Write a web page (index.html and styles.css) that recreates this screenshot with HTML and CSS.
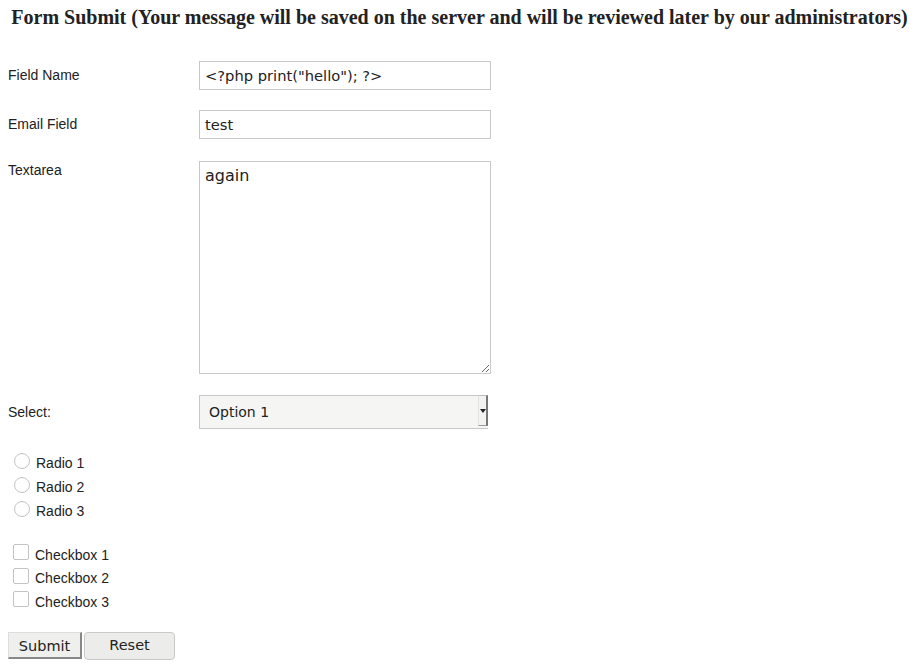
FILE: index.html
```html
<!DOCTYPE html>
<html>
<head>
<meta charset="utf-8">
<link rel="stylesheet" href="styles.css">
</head>
<body>
<h1 class="title">Form Submit (Your message will be saved on the server and will be reviewed later by our administrators)</h1>
<form class="form">
  <div class="row">
    <label class="lbl">Field Name</label>
    <input class="field" type="text" value='&lt;?php print("hello"); ?&gt;'>
  </div>
  <div class="row">
    <label class="lbl">Email Field</label>
    <input class="field" type="text" value="test">
  </div>
  <div class="row top">
    <label class="lbl lbl-top">Textarea</label>
    <textarea class="area">again</textarea>
  </div>
  <div class="row">
    <label class="lbl lbl-sel">Select:</label>
    <div class="sel-wrap">
      <select class="sel"><option>Option 1</option></select>
      <span class="sel-btn"><span class="tri"></span></span>
    </div>
  </div>
  <div class="group radios">
    <label class="opt"><input type="radio" class="radio" name="r"> Radio 1</label>
    <label class="opt"><input type="radio" class="radio" name="r"> Radio 2</label>
    <label class="opt"><input type="radio" class="radio" name="r"> Radio 3</label>
  </div>
  <div class="group checks">
    <label class="opt"><input type="checkbox" class="check"> Checkbox 1</label>
    <label class="opt"><input type="checkbox" class="check"> Checkbox 2</label>
    <label class="opt"><input type="checkbox" class="check"> Checkbox 3</label>
  </div>
  <div class="buttons">
    <button type="button" class="btn-submit">Submit</button>
    <button type="button" class="btn-reset">Reset</button>
  </div>
</form>
</body>
</html>
```
FILE: styles.css
```css
html, body { background: #fff; }
body {
  margin: 0;
  padding: 0 8px;
  font-family: "Liberation Sans", Arial, sans-serif;
  font-size: 14px;
  color: #222;
}
.title {
  font-family: "Liberation Serif", "Times New Roman", serif;
  font-size: 20px;
  font-weight: bold;
  color: #222;
  text-align: center;
  margin: 0 -8px;
  padding: 5px 0 0 6px;
  line-height: 25px;
  white-space: nowrap;
}
.form { margin-top: 31px; }
.row {
  display: flex;
  align-items: center;
  margin-bottom: 20px;
}
.row.top { align-items: flex-start; margin-top: 22px; margin-bottom: 21px; }
.lbl { width: 191px; flex: none; padding-bottom: 2px; }
.lbl-top { padding-top: 1px; padding-bottom: 0; }
.lbl-sel { padding-bottom: 0; }
.field {
  box-sizing: border-box;
  width: 292px;
  height: 29px;
  margin: 0;
  border: 1px solid #c8c8c8;
  padding: 0 5px;
  font-family: "DejaVu Sans", sans-serif;
  font-size: 14.7px;
  color: #222;
  background: #fff;
  outline: none;
}
.area {
  box-sizing: border-box;
  width: 292px;
  height: 213px;
  margin: 0;
  border: 1px solid #c8c8c8;
  padding: 4px 5px;
  font-family: "DejaVu Sans", sans-serif;
  font-size: 16px;
  color: #222;
  resize: both;
  outline: none;
}
.sel-wrap {
  position: relative;
  width: 289px;
  height: 34px;
}
.sel {
  -webkit-appearance: none;
  appearance: none;
  box-sizing: border-box;
  width: 289px;
  height: 34px;
  margin: 0;
  border: 1px solid #c8c8c8;
  border-right: none;
  background: #f5f5f3;
  padding: 0 9px;
  font-family: "DejaVu Sans", sans-serif;
  font-size: 14px;
  color: #222;
  outline: none;
}
.sel-btn {
  position: absolute;
  right: 0;
  top: 0;
  width: 10px;
  height: 31px;
  box-sizing: border-box;
  border-left: 1px solid #e2e2e2;
  border-right: 2px solid #777;
  border-bottom: 1px solid #999;
  border-top: 1px solid #bbb;
  background: #f3f3f1;
  display: flex;
  align-items: center;
  justify-content: center;
}
.tri {
  width: 0; height: 0;
  border-left: 3px solid transparent;
  border-right: 3px solid transparent;
  border-top: 4px solid #222;
}
.group { display: flex; flex-direction: column; }
.radios { margin-top: 22px; }
.checks { margin-top: 20px; }
.opt {
  display: flex;
  align-items: center;
  height: 24px;
  color: #222;
}
.checks .opt { height: 23.5px; }
.radio {
  -webkit-appearance: none;
  appearance: none;
  width: 16px; height: 16px;
  border: 1px solid #c4c4c4;
  border-radius: 50%;
  margin: -5px 6px 0 6px;
  background: #fff;
  box-sizing: border-box;
}
.check {
  -webkit-appearance: none;
  appearance: none;
  width: 16px; height: 16px;
  border: 1px solid #c4c4c4;
  border-radius: 2px;
  margin: -5px 6px 0 5px;
  background: #fff;
  box-sizing: border-box;
}
.buttons {
  display: flex;
  align-items: flex-start;
  gap: 2px;
  margin-top: 18px;
}
.btn-submit {
  box-sizing: border-box;
  width: 74px;
  height: 27px;
  margin: 0;
  padding: 2px 0 0;
  background: #efefed;
  border-style: solid;
  border-width: 1px 2px 2px 1px;
  border-color: #ddd #888 #888 #ddd;
  font-family: "DejaVu Sans", sans-serif;
  font-size: 14.5px;
  color: #222;
}
.btn-reset {
  box-sizing: border-box;
  width: 91px;
  height: 28px;
  margin: 0;
  padding: 0 0 1px;
  background: #ececea;
  border: 1px solid #c8c8c8;
  border-radius: 4px;
  font-family: "DejaVu Sans", sans-serif;
  font-size: 14.5px;
  color: #222;
}
```
